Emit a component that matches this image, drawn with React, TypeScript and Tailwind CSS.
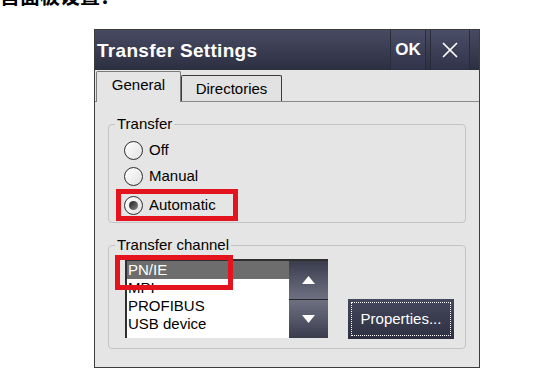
import { X } from 'lucide-react';

const ui = "font-['Liberation_Sans',Arial,sans-serif]";

function Radio({ checked }: { checked?: boolean }) {
  return (
    <span className="flex h-[19px] w-[19px] shrink-0 items-center justify-center rounded-full border-[1.5px] border-[#2e2e2e] bg-gradient-to-br from-white to-[#e2e2e2]">
      {checked && <span className="h-[9px] w-[9px] rounded-full bg-gradient-to-br from-[#222] to-[#8a8a8a]" />}
    </span>
  );
}

export default function App() {
  const channels = ['PN/IE', 'MPI', 'PROFIBUS', 'USB device'];

  return (
    <main className={`h-[390px] w-[544px] overflow-hidden bg-white ${ui}`}>
      {/* clipped caption above the screenshot */}
      <div className="h-[7px] overflow-hidden">
        <p className="-mt-[14px] font-['Noto_Sans_CJK_SC',sans-serif] text-[20px] font-bold leading-[20px] text-black">
          首面板设置：
        </p>
      </div>

      {/* Dialog */}
      <div className="ml-[94px] mt-[22px] flex h-[339px] w-[386px] flex-col border border-[#3c3c3c] bg-[#e5e5e5]">
        {/* Title bar */}
        <div className="flex h-[40px] shrink-0 items-center bg-gradient-to-b from-[#474b62] via-[#3a3d52] to-[#2c2f40]">
          <span className="pl-[2px] pt-[2px] text-[19px] font-bold tracking-[0.3px] text-white">Transfer Settings</span>
          <div className="ml-auto flex h-full">
            <button className="flex h-full w-[36px] items-center justify-center border-x border-[#2a2c3a] bg-gradient-to-b from-[#4a4e66] to-[#30334a] text-[17px] font-bold text-white">
              OK
            </button>
            <button className="ml-[4px] flex h-full w-[40px] items-center justify-center border-x border-[#2a2c3a] bg-gradient-to-b from-[#4a4e66] to-[#30334a] text-white">
              <X className="h-[26px] w-[26px]" strokeWidth={1.6} />
            </button>
            <div className="w-[9px]" />
          </div>
        </div>

        {/* Tabs */}
        <div className="flex h-[31px] shrink-0 items-end pl-[1px] text-[15px] text-black">
          <div className="relative z-10 -mb-px flex h-[31px] w-[85px] items-center justify-center rounded-t-[2px] border border-b-0 border-[#7a7a7a] bg-[#e5e5e5] pb-[4px]">
            General
          </div>
          <div className="flex h-[26px] w-[101px] items-center justify-center rounded-t-[2px] border border-b-0 border-[#3a3a3a] bg-[#e2e2e2] pt-[2px]">
            Directories
          </div>
        </div>

        {/* Panel */}
        <div className="relative flex-1 border-t border-[#8a8a8a] pl-[13px] pr-[13px] pt-[14px] text-[15px] text-black">
          <fieldset className="h-[107px] rounded-[4px] border border-[#c4c4c4]">
            <legend className="ml-[6px] px-[2px] leading-[16px]">Transfer</legend>
            <div className="mt-[5px] flex h-[26px] items-center gap-[6px] pl-[15px]">
              <Radio />
              <span>Off</span>
            </div>
            <div className="flex h-[26px] items-center gap-[6px] pl-[15px]">
              <Radio />
              <span>Manual</span>
            </div>
            <div className="ml-[7px] flex h-[32px] w-[122px] items-center gap-[6px] border-[5px] border-[#e3141e] pl-[3px]">
              <Radio checked />
              <span>Automatic</span>
            </div>
          </fieldset>

          <fieldset className="relative mt-[14px] h-[112px] rounded-[4px] border border-[#c4c4c4]">
            <legend className="ml-[6px] px-[2px] leading-[16px]">Transfer channel</legend>
            <div className="mt-[6px] flex items-start pl-[16px]">
              <div className="flex h-[79px] w-[203px] border-l-2 border-t-2 border-[#2f2f2f] bg-white">
                <ul className="flex-1 leading-[18px]">
                  {channels.map((c, i) => (
                    <li key={c} className={i === 0 ? 'bg-[#6d6d6d] pl-[1px] text-white' : 'pl-[1px]'}>
                      {c}
                    </li>
                  ))}
                </ul>
                <div className="flex w-[39px] flex-col">
                  <button className="flex flex-1 items-center justify-center border-b border-[#23252f] bg-gradient-to-b from-[#3a3c4c] via-[#555869] to-[#6e7080]">
                    <svg width="13" height="8" viewBox="0 0 13 8"><path d="M6.5 0 L13 8 L0 8 Z" fill="#fff" /></svg>
                  </button>
                  <button className="flex flex-1 items-center justify-center bg-gradient-to-b from-[#6e7080] via-[#555869] to-[#3a3c4c]">
                    <svg width="13" height="8" viewBox="0 0 13 8"><path d="M0 0 L13 0 L6.5 8 Z" fill="#fff" /></svg>
                  </button>
                </div>
              </div>
              <button className="ml-[20px] mt-[40px] flex h-[40px] w-[106px] items-center justify-center bg-gradient-to-b from-[#45485c] to-[#2e3042] p-[3px]">
                <span className="flex h-full w-full items-center justify-center border border-dotted border-white text-[15px] text-white">
                  Properties...
                </span>
              </button>
            </div>
            {/* highlight around selected channel */}
            <div className="absolute left-[6px] top-[2px] h-[35px] w-[118px] border-[5px] border-[#e3141e]" />
          </fieldset>
        </div>
      </div>

      {/* clipped figure caption below */}
      <div className="mt-[20px] pl-[261px] font-['Noto_Sans_CJK_SC',sans-serif] text-[16px] leading-[16px] text-black">图</div>
    </main>
  );
}
